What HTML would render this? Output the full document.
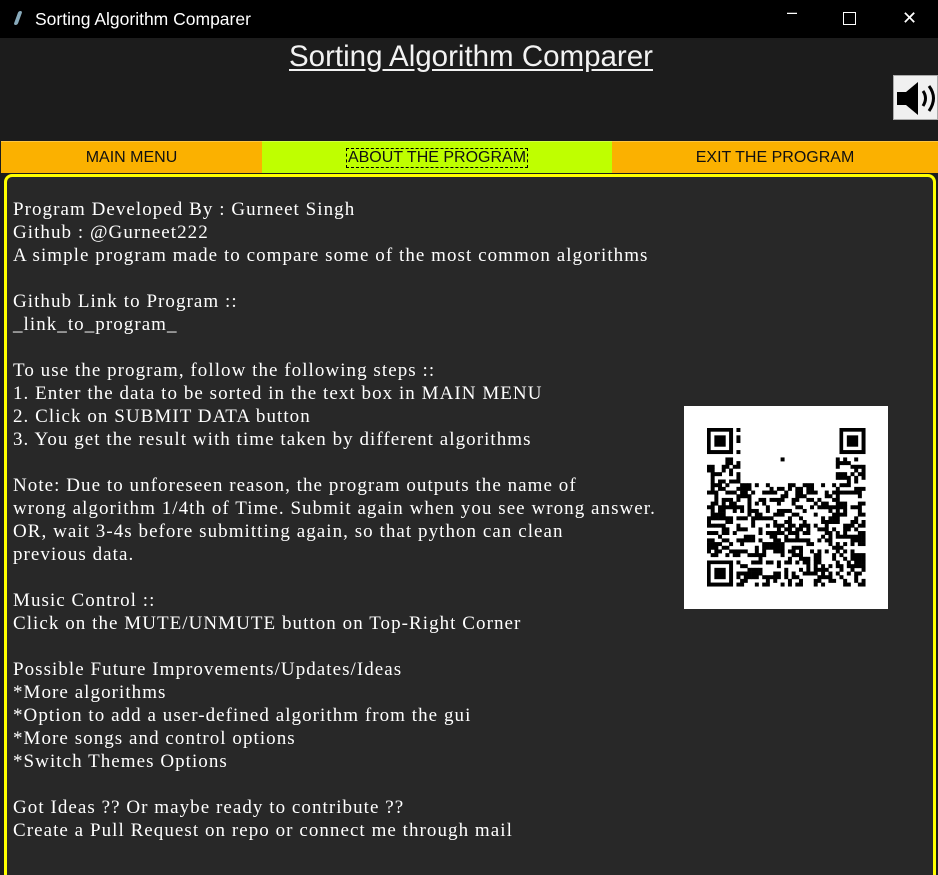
<!DOCTYPE html>
<html style="width:938px;height:875px;overflow:hidden"><head><meta charset="utf-8"><style>
*{margin:0;padding:0;box-sizing:border-box}
body{width:938px;height:875px;background:#1c1c1c;position:relative;overflow:hidden;font-family:"Liberation Sans",sans-serif}
.tb{position:absolute;left:0;top:0;width:938px;height:38px;background:#000;color:#fff;font-size:17.5px}
.tb .t{position:absolute;left:35px;top:9px}
.tb .ic{position:absolute;left:16px;top:11px;width:4px;height:14px;background:#8ab;transform:skewX(-20deg);border-radius:2px}
.tb .b{position:absolute;top:6px;font-size:18px}
.title{position:absolute;left:0;width:938px;top:40px;text-align:center;color:#f2f2f2;font-size:29.5px;text-decoration:underline;text-underline-offset:3px;padding-left:4px}
.spk{position:absolute;left:893px;top:75px;width:45px;height:45px;background:#f0f0f0;border:1px solid #aaa}
.tabs{position:absolute;top:141px;left:1px;height:32px;width:937px}
.tab{position:absolute;top:0;height:32px;font-size:16px;display:flex;align-items:center;justify-content:center;color:#111;border-top:1px solid #fff4}
.panel{position:absolute;left:4px;top:174px;width:932px;height:720px;border:3px solid #ffff00;border-radius:8px;background:#282828}
.txt{position:absolute;left:13px;top:198px;color:#fff;font-family:"Liberation Serif",serif;font-size:19px;line-height:23px;white-space:pre;letter-spacing:1.05px}
.qr{position:absolute;left:684px;top:406px;width:204px;height:203px;background:#fff}
</style></head><body>
<div class="tb"><div class="ic"></div><div class="t">Sorting Algorithm Comparer</div>
<div class="b" style="left:787px;top:2px">–</div><div class="b" style="left:843px;top:12px;width:13px;height:13px;border:1.5px solid #fff"></div><div class="b" style="left:902px;top:8px">✕</div></div>
<div class="title">Sorting Algorithm Comparer</div>
<div class="spk"><svg width="45" height="45" viewBox="0 0 45 45"><path d="M3 16h9l12-10v33l-12-10H3z" fill="#000"/><path d="M29 15q5 7 0 15" stroke="#000" stroke-width="3" fill="none"/><path d="M35 10q9 12 0 25" stroke="#000" stroke-width="3" fill="none"/></svg></div>
<div class="tabs">
<div class="tab" style="left:0;width:261px;background:#fbb100">MAIN MENU</div>
<div class="tab" style="left:261px;width:350px;background:#bfff00"><span style="border:1px dashed #000;padding:0 1px">ABOUT THE PROGRAM</span></div>
<div class="tab" style="left:611px;width:326px;background:#fbb100">EXIT THE PROGRAM</div>
</div>
<div class="panel"></div>
<div class="txt">Program Developed By : Gurneet Singh
Github : @Gurneet222
A simple program made to compare some of the most common algorithms

Github Link to Program ::
_link_to_program_

To use the program, follow the following steps ::
1. Enter the data to be sorted in the text box in MAIN MENU
2. Click on SUBMIT DATA button
3. You get the result with time taken by different algorithms

Note: Due to unforeseen reason, the program outputs the name of
wrong algorithm 1/4th of Time. Submit again when you see wrong answer.
OR, wait 3-4s before submitting again, so that python can clean
previous data.

Music Control ::
Click on the MUTE/UNMUTE button on Top-Right Corner

Possible Future Improvements/Updates/Ideas
*More algorithms
*Option to add a user-defined algorithm from the gui
*More songs and control options
*Switch Themes Options

Got Ideas ?? Or maybe ready to contribute ??
Create a Pull Request on repo or connect me through mail</div>
<div class="qr"><svg id="q" width="204" height="203" viewBox="0 0 204 203"></svg></div>
<script>
var s=document.getElementById('q'),h='',m=3.68,ox=23,oy=22,n=43;
function r(x,y,w,hh){h+='<rect x="'+(ox+x*m)+'" y="'+(oy+y*m)+'" width="'+(w*m+0.3)+'" height="'+(hh*m+0.3)+'" fill="#000"/>';}
function f(x,y){r(x,y,7,7);h+='<rect x="'+(ox+(x+1)*m)+'" y="'+(oy+(y+1)*m)+'" width="'+(5*m)+'" height="'+(5*m)+'" fill="#fff"/>';r(x+2,y+2,3,3);}
f(0,0);f(n-7,0);f(0,n-7);
var seed=7;function rnd(){seed=(seed*16807)%2147483647;return seed/2147483647;}
for(var y=0;y<n;y++)for(var x=0;x<n;x++){
if((x<8&&y<8)||(x>=n-8&&y<8)||(x<8&&y>=n-8))continue;
if(y<9&&x>8&&x<n-8){if(x==20&&y==8)r(x,y,1,1);continue;}
if(y<15&&x>8&&x<n-8)continue;
if(rnd()<0.5)r(x,y,1,1);}
s.innerHTML=h;
</script>
</body></html>
